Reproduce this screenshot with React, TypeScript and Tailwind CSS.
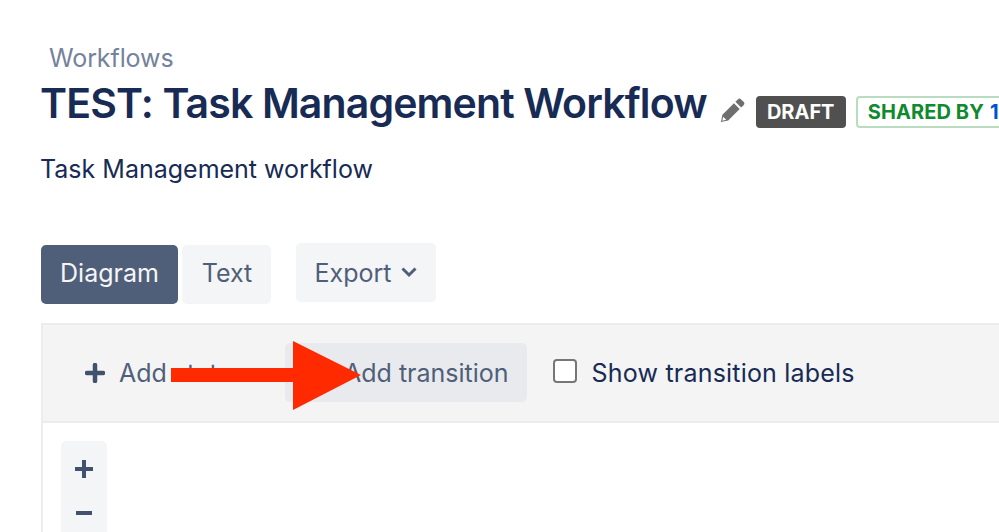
import React from 'react'

const inter = { fontFamily: 'Inter, "Noto Sans", sans-serif' }

function PlusIcon({ className }: { className: string }) {
  return (
    <svg viewBox="0 0 20 20" className={className} fill="none">
      <path d="M10 2v16M2 10h16" stroke="currentColor" strokeWidth="4.500" strokeLinecap="round" />
    </svg>
  )
}

export default function App() {
  return (
    <div style={inter} className="relative h-[532px] w-[999px] overflow-hidden bg-white font-['Inter',sans-serif]">
      <header className="pl-[41px] pt-[42px]">
        <div className="pl-[8px] text-[25px] leading-[32px] tracking-[-0.1px] text-[#74829b]">Workflows</div>
        <div className="mt-[1px] flex h-[56px] items-center whitespace-nowrap">
          <h1 className="ml-[-1px] text-[41px] leading-[56px] font-semibold tracking-[-0.87px] text-[#172b55]">TEST: Task Management Workflow</h1>
          <svg viewBox="0 0 26 26" className="mt-[14px] ml-[13px] h-[25px] w-[25px] shrink-0 text-[#6f6f6f]" fill="currentColor">
            <path d="M18.5 1.5a2.5 2.5 0 0 1 3.5 0l2.5 2.5a2.5 2.5 0 0 1 0 3.5L22 10l-6-6z" />
            <path d="M14.5 5.5l6 6L8.5 23.500 1 25l1.500-7.500z" />
            <path d="M3.300 19.500l-.9 4.100 4.100-.9z" fill="#ffffff" />
          </svg>
          <span className="mt-[17px] ml-[11px] flex h-[32px] w-[90px] shrink-0 items-center justify-center rounded-[4px] bg-[#505050] text-[20px] font-bold text-white">DRAFT</span>
          <span className="mt-[17px] ml-[10px] flex h-[32px] w-[200px] shrink-0 items-center rounded-l-[4px] border-2 border-[#b9dcc0] pl-[10px] text-[20px] font-bold tracking-[0.1px] text-[#0f8a2e]">
            SHARED BY <span className="ml-[6px] text-[#0052cc]">1</span>
          </span>
        </div>
        <p className="mt-[22px] ml-[-1px] text-[25px] leading-[32px] text-[#172b55]">Task Management workflow</p>
      </header>

      <div className="mt-[58px] flex items-start pl-[41px] text-[25px] text-[#42526e]">
        <button className="mt-[2px] h-[59px] w-[137px] rounded-[5px] bg-[#505f79] pb-[2px] text-[#f4f5f7]">Diagram</button>
        <button className="mt-[2px] ml-[4px] h-[59px] w-[89px] rounded-[5px] bg-[#f4f5f7] pb-[2px] pl-[1px] text-[#505f79]">Text</button>
        <button className="ml-[25px] flex h-[59px] w-[140px] items-center justify-center gap-[10px] rounded-[5px] bg-[#f4f5f7] pt-[2px] text-[#505f79]">
          Export
          <svg viewBox="0 0 16 11" className="mb-[2px] h-[11px] w-[16px]" fill="none">
            <path d="M1.500 1.500L8 8l6.500-6.500" stroke="currentColor" strokeWidth="3" />
          </svg>
        </button>
      </div>

      <section className="mt-[19px] ml-[41px] h-[300px] border-l-2 border-t-2 border-[#ececec]">
        <div className="flex h-[98px] items-center border-b-2 border-[#ececec] bg-[#f4f4f4] pl-[42px] text-[25px] text-[#505f79]">
          <button className="flex items-center gap-[14px] whitespace-nowrap pt-[2px]">
            <PlusIcon className="mb-[2px] h-[20px] w-[20px] text-[#42526e]" />
            Add status
          </button>
          <button className="mb-[2px] ml-[39px] flex h-[59px] w-[242px] items-center justify-end whitespace-nowrap rounded-[5px] bg-[#e9eaee] pr-[18px] pt-[4px]">
            Add transition
          </button>
          <span className="mb-[4px] ml-[26px] h-[24px] w-[24px] shrink-0 rounded-[4px] border-2 border-[#767676] bg-white" />
          <span className="ml-[15px] whitespace-nowrap pt-[2px] tracking-[0.2px] text-[#172b55]">Show transition labels</span>
        </div>
        <div className="ml-[18px] mt-[18px] flex h-[110px] w-[46px] flex-col items-center rounded-[5px] bg-[#f4f5f7] pt-[18px] text-[#42526e]">
          <svg viewBox="0 0 20 20" className="h-[20px] w-[20px]" fill="none">
            <path d="M10 1v18M1 10h18" stroke="currentColor" strokeWidth="4" />
          </svg>
          <svg viewBox="0 0 20 20" className="mt-[24px] h-[20px] w-[20px]" fill="none">
            <path d="M2 10h16" stroke="currentColor" strokeWidth="4" />
          </svg>
        </div>
      </section>

      <svg viewBox="0 0 999 532" className="pointer-events-none absolute inset-0 h-[532px] w-[999px]">
        <polygon points="171,368 293,368 293,341 361,375 293,410 293,382 171,382" fill="#ff2a00" />
      </svg>
    </div>
  )
}
